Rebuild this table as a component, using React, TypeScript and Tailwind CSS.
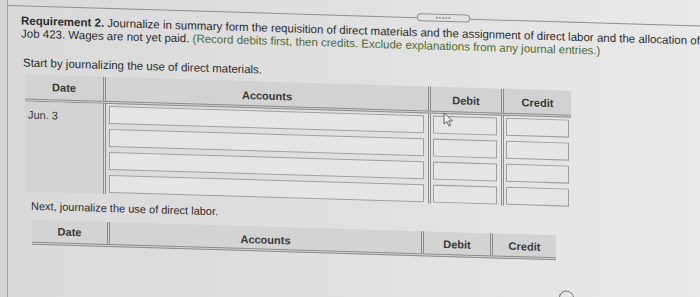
import React from "react";

const rows = [0, 1, 2, 3];
const line = "border-[#8c8c8c]";

const Input = () => <div className="h-[18px] border border-[#a0a0a0] bg-[#e5e5e5]" />;

const App = () => {
  return (
    <div className="flex w-[700px] h-[297px] overflow-hidden bg-linear-to-r from-[#d9d9d9] via-[#e0e0e0] to-[#e9e9e9] font-['Liberation_Sans',Arial,sans-serif] text-[#2b2b2b]">
      <div className="w-[8px] shrink-0 bg-[#d5d5d5] border-r border-[#a3a3a3]" />
      <div className="relative flex-1 skew-y-[1.7deg] origin-top-left">
        {/* top bar with drag handle */}
        <div className="flex items-center h-[8px] mt-[1px]">
          <div className="w-[409px] h-px bg-[#8f8f8f]" />
          <div className="w-[53px] h-[8px] rounded-full border border-[#8f8f8f] bg-[#e2e2e2] flex items-center justify-center text-[6px] leading-none tracking-[1px] text-[#666]">
            •••••
          </div>
          <div className="flex-1 h-px bg-[#8f8f8f]" />
        </div>

        <div className="pl-[13px] mt-[5px] text-[11.5px] leading-[13px] whitespace-nowrap">
          <p>
            <span className="font-bold">Requirement 2.</span> Journalize in summary form the requisition of direct materials and the assignment of direct labor and the allocation of
          </p>
          <p>
            Job 423. Wages are not yet paid. <span className="text-[#4c6b30]">(Record debits first, then credits. Exclude explanations from any journal entries.)</span>
          </p>
        </div>

        <p className="pl-[15px] mt-[16px] text-[11.5px] leading-[13px]">Start by journalizing the use of direct materials.</p>

        {/* table 1 */}
        <div className="ml-[17px] mt-[5px] w-[546px] text-[11px] text-[#383838]">
          <div className={`flex h-[27px] bg-[#d2d2d2] border-b-[3px] border-double ${line} font-bold`}>
            <div className="w-[78px] flex items-center justify-center pt-[1px]">Date</div>
            <div className={`w-[325px] border-l-[3px] border-double ${line} flex items-center justify-center pt-[5px]`}>Accounts</div>
            <div className={`w-[73px] border-l-[3px] border-double ${line} flex items-center justify-center pt-[3px]`}>Debit</div>
            <div className={`w-[70px] border-l-[3px] border-double ${line} flex items-center justify-center pt-[3px]`}>Credit</div>
          </div>
          <div className="flex h-[90px]">
            <div className="w-[78px] bg-[#d3d3d3] pl-[3px] pt-[7px] leading-[13px]">Jun. 3</div>
            <div className={`w-[325px] border-l-[3px] border-double ${line} flex flex-col gap-[5px] pt-[2px] pl-[3px] pr-[4px]`}>
              {rows.map((r) => (
                <Input key={r} />
              ))}
            </div>
            <div className={`w-[73px] border-l-[3px] border-double ${line} flex flex-col gap-[5px] pt-[2px] pl-[2px] pr-[4px]`}>
              {rows.map((r) => (
                <Input key={r} />
              ))}
            </div>
            <div className={`w-[70px] border-l-[3px] border-double ${line} flex flex-col gap-[5px] pt-[2px] pl-[2px] pr-[2px]`}>
              {rows.map((r) => (
                <Input key={r} />
              ))}
            </div>
          </div>
        </div>

        <p className="pl-[23px] mt-[8px] text-[11px] leading-[13px]">Next, journalize the use of direct labor.</p>

        {/* table 2 */}
        <div className="ml-[24px] mt-[7px] w-[524px] text-[11px] text-[#383838]">
          <div className={`flex h-[25px] bg-[#d3d3d3] border-b-[3px] border-double ${line} font-bold`}>
            <div className="w-[75px] flex items-center justify-center">Date</div>
            <div className={`w-[314px] border-l-[3px] border-double ${line} flex items-center justify-center pt-[4px]`}>Accounts</div>
            <div className={`w-[69px] border-l-[3px] border-double ${line} flex items-center justify-center pt-[2px]`}>Debit</div>
            <div className={`w-[66px] border-l-[3px] border-double ${line} flex items-center justify-center pt-[2px]`}>Credit</div>
          </div>
        </div>

        <div className="ml-[551px] mt-[30px] w-[15px] h-[15px] rounded-full border-[1.5px] border-[#7a7a7a]" />

        {/* mouse cursor */}
        <svg className="absolute left-[435px] top-[99px]" width="11" height="15" viewBox="0 0 11 15">
          <path d="M1 1 L1 12 L3.8 9.4 L5.8 13.8 L7.6 13 L5.7 8.8 L9.5 8.6 Z" fill="#f4f4f4" stroke="#555" strokeWidth="0.9" strokeLinejoin="round" />
        </svg>
      </div>
    </div>
  );
};

export default App;
